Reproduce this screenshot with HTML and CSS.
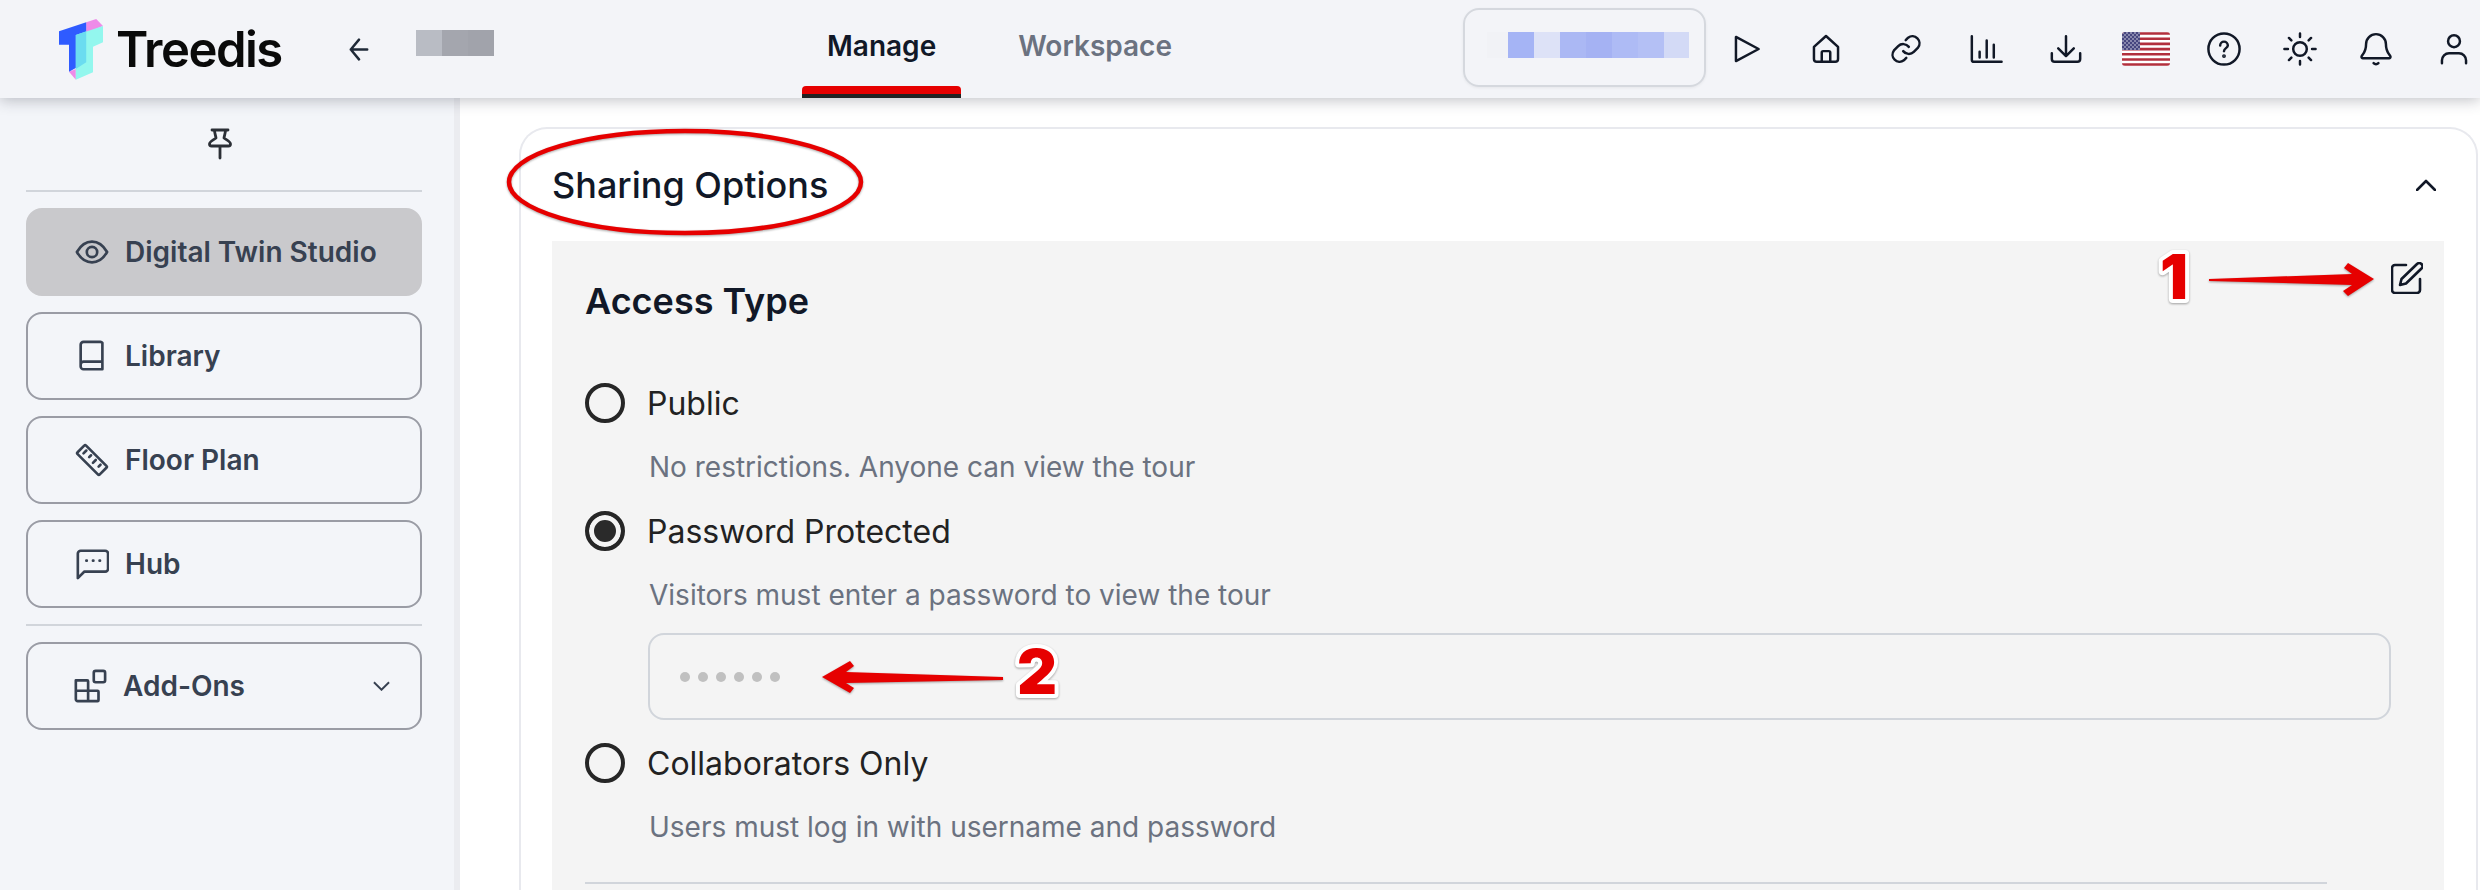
FILE: index.html
```html
<!DOCTYPE html>
<html lang="en">
<head>
    <meta charset="UTF-8">
    <title>Treedis - Sharing Options</title>
    <link rel="stylesheet" href="styles.css">
</head>
<body>
    <header class="topbar">
        <svg class="logo" viewBox="150 55 110 183" preserveAspectRatio="none">
            <polygon fill="#ee8be8" points="218,65 243,55 260,76 218,97"/>
            <polygon fill="#ee8be8" points="175,213 192,205 192,237"/>
            <polygon fill="#2f5bff" points="150,92 218,65 218,185 175,213 175,132 150,132"/>
            <polygon fill="#93f7ee" points="260,76 260,125 235,138 235,215 192,237 192,103"/>
            <polygon fill="#6bdcf0" points="192,103 218,92 218,185 192,205"/>
        </svg>
        <span class="brand">Treedis</span>
        <svg class="back" viewBox="0 0 24 28"><path d="M22 14H2M12 2 2 14l10 12"/></svg>
        <div class="blur blur-name"><i></i><i></i><i></i></div>
        <nav class="tabs">
            <a class="tab tab-active" href="#">Manage</a>
            <a class="tab" href="#">Workspace</a>
        </nav>
        <div class="url-box">
            <div class="blur blur-url"><i></i><i></i><i></i><i></i><i></i><i></i><i></i><i></i></div>
        </div>
        <div class="top-icons">
            <svg class="icon" viewBox="0 0 24 24"><path d="M3.500 3.500v17l16-8.500z"/></svg>
            <svg class="icon" viewBox="0 0 24 24"><path d="M3.500 10.500 12 2.800l8.500 7.700V19a2 2 0 0 1-2 2h-13a2 2 0 0 1-2-2zM9 21v-6.500a1 1 0 0 1 1-1h4a1 1 0 0 1 1 1V21"/></svg>
            <svg class="icon" viewBox="0 0 24 24"><path d="M10 13.500a5 5 0 0 0 7.500.5l3-3a5 5 0 0 0-7-7l-1.700 1.700M14 10.500a5 5 0 0 0-7.500-.5l-3 3a5 5 0 0 0 7 7l1.700-1.700"/></svg>
            <svg class="icon" viewBox="0 0 24 24"><path d="M2 3v16.500A1.500 1.500 0 0 0 3.500 21H23M7.500 18v-4M12.500 18V6M17.500 18V9"/></svg>
            <svg class="icon" viewBox="0 0 24 24"><path d="M12 3v14M6.500 11.500 12 17l5.500-5.500M2 15v4a2 2 0 0 0 2 2h16a2 2 0 0 0 2-2v-4"/></svg>
            <svg class="flag" viewBox="0 0 48 34">
                <defs>
                    <pattern id="stars" width="4" height="4" patternUnits="userSpaceOnUse">
                        <rect width="4" height="4" fill="#46467f"/>
                        <circle cx="1" cy="1" r=".8" fill="#d9d9e8"/>
                        <circle cx="3" cy="3" r=".8" fill="#d9d9e8"/>
                    </pattern>
                </defs>
                <rect width="48" height="34" rx="3" fill="#fff"/>
                <path d="M0 1.500h48M0 6.700h48M0 11.900h48M0 17.100h48M0 22.300h48M0 27.500h48M0 32.500h48" stroke="#b22f3d" stroke-width="2.600"/>
                <rect width="18" height="18" fill="url(#stars)"/>
            </svg>
            <svg class="icon" viewBox="0 0 24 24"><circle cx="12" cy="12" r="11"/><path d="M9.300 9.500a2.700 2.700 0 0 1 5.400 0c0 1.800-2.700 2-2.700 4"/><circle class="dot" cx="12" cy="17" r=".5"/></svg>
            <svg class="icon" viewBox="0 0 24 24"><circle cx="12" cy="12" r="4.800"/><path d="M12 1v2.500M12 20.500V23M1 12h2.500M20.500 12H23M4.200 4.200 5.900 5.900M18.100 18.100l1.700 1.700M4.200 19.800l1.700-1.700M18.100 5.900l1.700-1.700"/></svg>
            <svg class="icon" viewBox="0 0 24 24"><path d="M12 1.500A7 7 0 0 0 5 8.500c0 6-2.500 7-3.200 8.700a1 1 0 0 0 1 1.300h18.400a1 1 0 0 0 1-1.300C21.500 15.500 19 14.500 19 8.500a7 7 0 0 0-7-7zM10.300 22a2.300 2.300 0 0 0 3.400 0"/></svg>
            <svg class="icon" viewBox="0 0 24 24"><circle cx="12" cy="6.500" r="4.200"/><path d="M3.500 22v-2a5 5 0 0 1 5-5h7a5 5 0 0 1 5 5v2"/></svg>
        </div>
    </header>

    <div class="layout">
        <aside class="sidebar">
            <div class="pin-row">
                <svg class="pin" viewBox="0 0 24 32"><path d="M4 2h16M6.500 2c0 3 1 5 1.500 8-2.500 2-6.500 3.500-6.500 6 0 1 .8 2 2 2h17c1.200 0 2-1 2-2 0-2.500-4-4-6.500-6 .5-3 1.500-5 1.500-8M12 18v12"/></svg>
            </div>
            <hr class="side-line">
            <a class="side-item side-active" href="#">
                <svg class="side-icon" viewBox="0 0 36 36"><path d="M2 18c4-7 9-11 16-11s12 4 16 11c-4 7-9 11-16 11S6 25 2 18z"/><circle cx="18" cy="18" r="5.500"/></svg>
                <span>Digital Twin Studio</span>
            </a>
            <a class="side-item" href="#">
                <svg class="side-icon" viewBox="0 0 36 36"><path d="M6 27V6a3 3 0 0 1 3-3h18a3 3 0 0 1 2 1v28H9a3 3 0 0 1-3-3v-2a3 3 0 0 1 3-3h20"/></svg>
                <span>Library</span>
            </a>
            <a class="side-item" href="#">
                <svg class="side-icon" viewBox="0 0 36 36"><path d="M2.500 10 10 2.500a1 1 0 0 1 1.500 0l22 22a1 1 0 0 1 0 1.500L26 33.500a1 1 0 0 1-1.500 0l-22-22a1 1 0 0 1 0-1.500zM12 8l-3 3M17 13l-2 2M22 18l-3 3M27 23l-2 2"/></svg>
                <span>Floor Plan</span>
            </a>
            <a class="side-item" href="#">
                <svg class="side-icon" viewBox="0 0 36 36"><path d="M3 33V7a3 3 0 0 1 3-3h26a3 3 0 0 1 3 3v16a3 3 0 0 1-3 3H10zM12 14.500h.5M19 14.500h.5M26 14.500h.5"/></svg>
                <span>Hub</span>
            </a>
            <hr class="side-line">
            <a class="side-item side-addons" href="#">
                <svg class="side-icon" viewBox="0 0 36 36"><path d="M3 12h12a1 1 0 0 1 1 1v10h10a1 1 0 0 1 1 1v9a1 1 0 0 1-1 1H5a2 2 0 0 1-2-2zM3 23h13M16 23v11"/><rect x="22" y="2" width="12" height="12" rx="2"/></svg>
                <span>Add-Ons</span>
                <svg class="side-chevron" viewBox="0 0 18 10"><path d="M1 1l8 8 8-8"/></svg>
            </a>
        </aside>

        <main class="content">
            <section class="card">
                <div class="card-head">
                    <h2 class="card-title">Sharing Options</h2>
                    <svg class="collapse" viewBox="0 0 20 12"><path d="M1 11l9-9 9 9"/></svg>
                </div>
                <div class="panel">
                    <div class="panel-head">
                        <h3 class="panel-title">Access Type</h3>
                        <svg class="edit" viewBox="0 0 32 32"><path d="M15 3H4a3 3 0 0 0-3 3v22a3 3 0 0 0 3 3h22a3 3 0 0 0 3-3V17M9 23l1.500-6L26 2a3 3 0 0 1 4.500 4.500L15 21.500z"/></svg>
                    </div>
                    <div class="radio-row first-row">
                        <span class="radio"></span>
                        <label>Public</label>
                    </div>
                    <p class="hint">No restrictions. Anyone can view the tour</p>
                    <div class="radio-row">
                        <span class="radio radio-on"></span>
                        <label>Password Protected</label>
                    </div>
                    <p class="hint">Visitors must enter a password to view the tour</p>
                    <div class="password-box">
                        <i></i><i></i><i></i><i></i><i></i><i></i>
                    </div>
                    <div class="radio-row collab-row">
                        <span class="radio"></span>
                        <label>Collaborators Only</label>
                    </div>
                    <p class="hint">Users must log in with username and password</p>
                    <hr class="panel-line">
                </div>
            </section>
        </main>
    </div>

    <!-- anotaciones rojas encima de la captura -->
    <svg class="marks" viewBox="0 0 2480 890">
        <ellipse cx="685" cy="182" rx="176" ry="51" fill="none" stroke="#e60000" stroke-width="4.500"/>
        <polygon fill="#e60000" points="2209,279 2352,274 2344,268 2348,263 2374,279 2348,296 2343,291 2352,285 2209,281"/>
        <polygon fill="#e60000" points="822,677 850,661 854,666 846,672 1003,677 1003,680 846,683 854,688 850,693"/>
        <text class="mark-num" x="2174" y="299">1</text>
        <text class="mark-num" x="1037" y="694">2</text>
    </svg>
</body>
</html>
```

FILE: styles.css
```css
/* Estilo general */
body {
    margin: 0;
    width: 2480px;
    height: 890px;
    overflow: hidden;
    position: relative;
    font-family: 'Inter', 'Liberation Sans', sans-serif;
    background: #fff;
    color: #111827;
}

a {
    text-decoration: none;
}

/* Barra superior */
.topbar {
    height: 98px;
    display: flex;
    align-items: center;
    padding-left: 59px;
    background: #f3f4f8;
    box-shadow: 0 2px 14px rgba(40, 44, 60, 0.3);
    position: relative;
    z-index: 2;
}

.topbar > * {
    flex: none;
}

.logo {
    width: 44px;
    height: 61px;
}

.brand {
    margin-left: 13px;
    width: 163px;
    font-size: 49px;
    font-weight: 600;
    letter-spacing: -1.500px;
    color: #0a0a0a;
}

.back {
    width: 24px;
    height: 23px;
    margin-left: 68px;
    fill: none;
    stroke: #1f2937;
    stroke-width: 3;
    stroke-linecap: round;
    stroke-linejoin: round;
}

.blur {
    display: flex;
    height: 26px;
}

.blur i {
    display: block;
    width: 26px;
}

.blur-name {
    margin-left: 45px;
    margin-top: -12px;
}

.blur-name i:nth-child(1) { background: #b9bcc4; }
.blur-name i:nth-child(2) { background: #a4a6ae; }
.blur-name i:nth-child(3) { background: #a1a3ab; }

.tabs {
    display: flex;
    gap: 32px;
    margin-left: 308px;
    align-self: stretch;
}

.tab {
    display: flex;
    align-items: center;
    padding: 0 25px 6px;
    font-size: 28px;
    font-weight: 600;
    color: #6b7280;
    position: relative;
}

.tab-active {
    color: #111827;
}

.tab-active::after {
    content: '';
    position: absolute;
    left: 0;
    right: 0;
    bottom: 0;
    height: 8px;
    border-bottom: 4px solid #222;
    background: #e60000;
    border-radius: 4px 4px 0 0;
}

.url-box {
    margin-left: auto;
    box-sizing: border-box;
    width: 243px;
    height: 79px;
    margin-top: -4px;
    padding: 22px 0 0 22px;
    border: 2px solid #d5d8de;
    border-radius: 16px;
    box-shadow: 0 1px 3px rgba(0, 0, 0, 0.06);
}

.blur-url i:nth-child(1) { background: #f1f2f6; width: 21px; }
.blur-url i:nth-child(2) { background: #a5b4f5; }
.blur-url i:nth-child(3) { background: #dde2f7; }
.blur-url i:nth-child(4) { background: #abb8f4; }
.blur-url i:nth-child(5) { background: #a5b2f3; }
.blur-url i:nth-child(6) { background: #aebbf5; }
.blur-url i:nth-child(7) { background: #b4c0f5; }
.blur-url i:nth-child(8) { background: #d3daf6; width: 25px; }

.top-icons {
    display: flex;
    align-items: center;
    gap: 46px;
    margin-left: 25px;
    margin-right: 9px;
}

.icon {
    width: 34px;
    height: 34px;
    flex: none;
    fill: none;
    stroke: #111827;
    stroke-width: 1.750;
    stroke-linecap: round;
    stroke-linejoin: round;
}

.icon .dot {
    fill: #111827;
}

/* los iconos no estan a la misma distancia */
.top-icons > :nth-child(2) { margin-left: -2px; }
.top-icons > :nth-child(7) { margin-left: -2px; }
.top-icons > :nth-child(8) { margin-left: -4px; }
.top-icons > :nth-child(9) { margin-left: -4px; }
.top-icons > :nth-child(10) { margin-left: -2px; }

.flag {
    width: 48px;
    height: 34px;
    flex: none;
    margin: 0 -7px;
    border-radius: 3px;
}

/* Cuerpo de la pagina */
.layout {
    display: flex;
    height: 792px;
    overflow: hidden;
}

.sidebar {
    width: 396px;
    flex: none;
    display: flex;
    flex-direction: column;
    gap: 16px;
    padding: 0 32px 0 26px;
    background: #f3f5f9;
    border-right: 6px solid #ebecf0;
}

.pin-row {
    height: 92px;
    margin-bottom: -16px;
    display: flex;
    justify-content: center;
    align-items: flex-start;
    padding-right: 8px;
}

.pin {
    width: 24px;
    height: 32px;
    margin-top: 30px;
    fill: none;
    stroke: #2b2f36;
    stroke-width: 2.800;
    stroke-linecap: round;
    stroke-linejoin: round;
}

.side-line {
    width: 100%;
    height: 2px;
    margin: 0;
    border: none;
    background: #d1d5db;
}

.side-item {
    box-sizing: border-box;
    height: 88px;
    display: flex;
    align-items: center;
    gap: 16px;
    padding: 0 30px 0 47px;
    border: 2px solid #9a9ca5;
    border-radius: 16px;
    font-size: 28px;
    font-weight: 600;
    color: #374151;
}

.side-active {
    background: #c9c9cc;
    border-color: #c9c9cc;
}

.side-icon {
    width: 34px;
    height: 34px;
    flex: none;
    fill: none;
    stroke: #374151;
    stroke-width: 2.800;
    stroke-linecap: round;
    stroke-linejoin: round;
}

.side-addons {
    padding-left: 45px;
}

.side-chevron {
    width: 17px;
    height: 10px;
    margin-left: auto;
    fill: none;
    stroke: #374151;
    stroke-width: 2;
}

/* Contenido */
.content {
    flex: 1;
    padding: 29px 2px 0 59px;
    min-width: 0;
}

.card {
    box-sizing: border-box;
    height: 763px;
    display: flex;
    flex-direction: column;
    padding: 0 32px 0 31px;
    border: 2px solid #e8e9ee;
    border-bottom: none;
    border-radius: 28px 28px 0 0;
    background: #fff;
}

.card-head {
    height: 112px;
    flex: none;
    display: flex;
    align-items: center;
    justify-content: space-between;
    padding-right: 8px;
}

.card-title {
    margin: 0;
    font-size: 36px;
    font-weight: 500;
    color: #111827;
}

.collapse {
    width: 20px;
    height: 12px;
    fill: none;
    stroke: #111827;
    stroke-width: 2.600;
    stroke-linecap: round;
    stroke-linejoin: round;
}

.panel {
    flex: 1;
    padding: 21px 21px 0 33px;
    background: #f4f4f4;
}

.panel-head {
    display: flex;
    justify-content: space-between;
    align-items: flex-start;
}

.panel-title {
    margin: 19px 0 0;
    font-size: 36px;
    line-height: 40px;
    font-weight: 600;
    color: #111827;
}

.edit {
    width: 32px;
    height: 32px;
    fill: none;
    stroke: #111827;
    stroke-width: 2.600;
    stroke-linecap: round;
    stroke-linejoin: round;
}

.radio-row {
    display: flex;
    align-items: center;
    gap: 22px;
    height: 40px;
    font-size: 32px;
    color: #222;
}

.first-row {
    margin-top: 62px;
}

.collab-row {
    margin-top: 23px;
}

.radio {
    box-sizing: border-box;
    width: 40px;
    height: 40px;
    flex: none;
    border: 4px solid #262626;
    border-radius: 50%;
}

.radio-on {
    background: #2a2a2a;
    box-shadow: inset 0 0 0 5px #f4f4f4;
}

.hint {
    margin: 24px 0 24px 64px;
    font-size: 28px;
    line-height: 40px;
    color: #6b7280;
}

.password-box {
    box-sizing: border-box;
    height: 87px;
    margin: -6px 32px 0 63px;
    display: flex;
    align-items: center;
    gap: 8px;
    padding: 0 0 0 30px;
    border: 2px solid #d1d5db;
    border-radius: 16px;
}

.password-box i {
    display: block;
    width: 10px;
    height: 10px;
    border-radius: 50%;
    background: #c0c0c0;
}

.panel-line {
    height: 2px;
    margin: 35px 96px 0 0;
    border: none;
    background: #d1d5db;
}

/* Anotaciones */
.marks {
    position: absolute;
    left: 0;
    top: 0;
    width: 2480px;
    height: 890px;
    z-index: 3;
    pointer-events: none;
    filter: drop-shadow(0 1px 1px rgba(0, 0, 0, 0.35));
}

.mark-num {
    font-family: 'Inter', 'Liberation Sans', sans-serif;
    font-size: 62px;
    font-weight: 900;
    text-anchor: middle;
    fill: #e60000;
    stroke: #fff;
    stroke-width: 8px;
    stroke-linejoin: round;
    paint-order: stroke fill;
}
```
